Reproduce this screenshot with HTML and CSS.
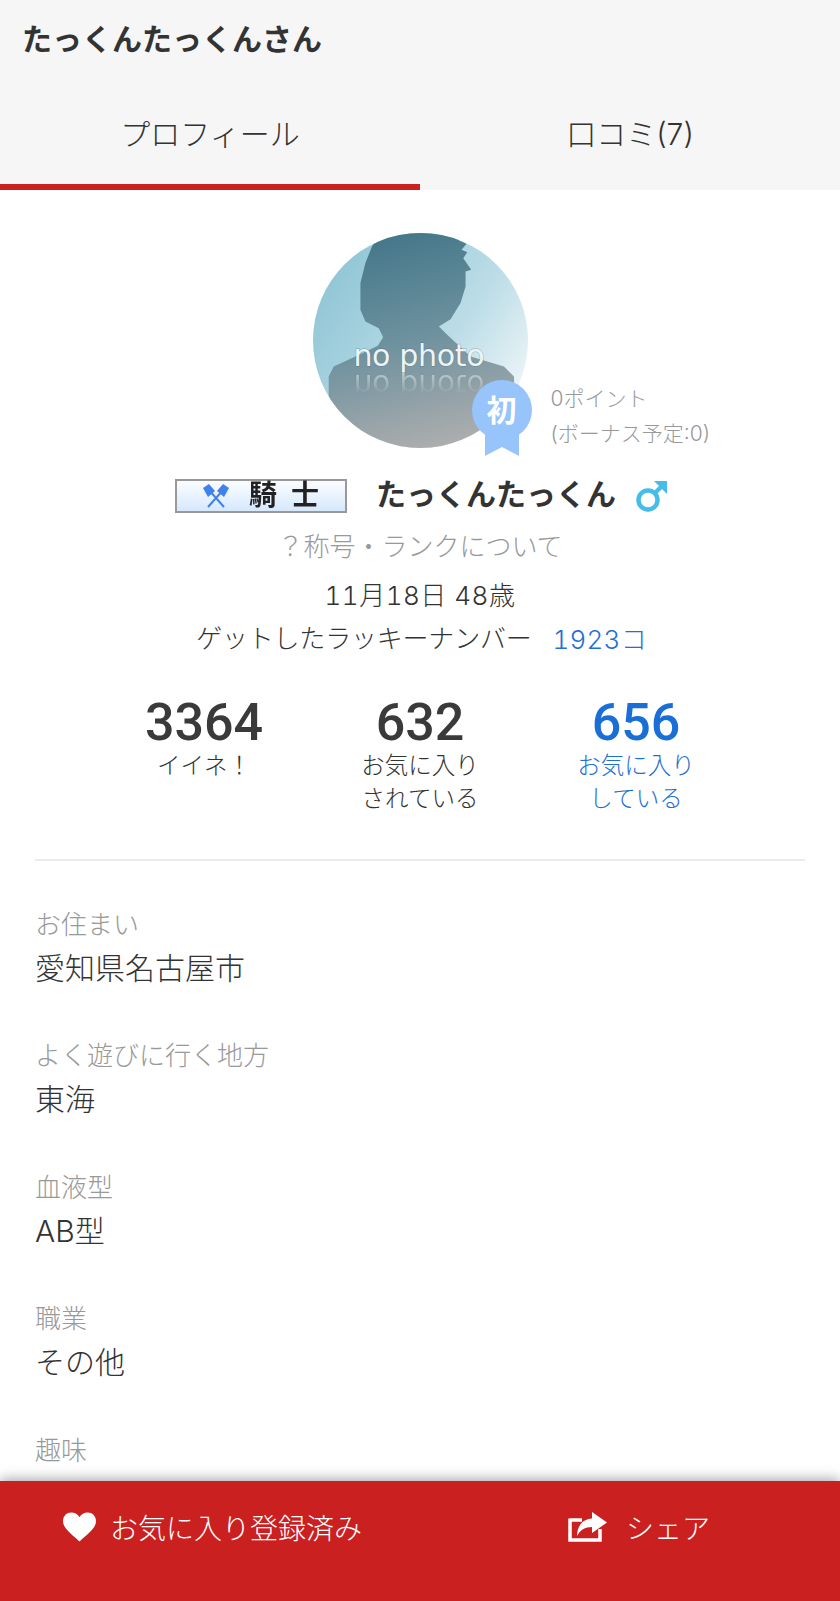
FILE: index.html
```html
<!DOCTYPE html>
<html>
<head>
    <title>たっくんたっくんさん</title>
    <link rel="stylesheet" href="styles.css">
</head>
<body>

    <div class="page">
        <header class="header">
            <h1 class="pageTitle">たっくんたっくんさん</h1>
            <nav class="tabs">
                <a class="tab active">プロフィール</a>
                <a class="tab">口コミ(7)</a>
            </nav>
        </header>

        <main class="content">
            <section class="hero">
                <div class="avatarWrap">
                    <svg class="avatar" viewBox="68 40 644 644">
                        <defs>
                            <linearGradient id="bgGrad" x1="0.1" y1="0.1" x2="0.95" y2="0.7">
                                <stop offset="0" stop-color="#8fc5d5"/>
                                <stop offset="0.65" stop-color="#bcdde7"/>
                                <stop offset="1" stop-color="#e8f3f6"/>
                            </linearGradient>
                            <linearGradient id="bodyGrad" x1="0.35" y1="0" x2="0.6" y2="1">
                                <stop offset="0" stop-color="#437789"/>
                                <stop offset="0.5" stop-color="#6f929f"/>
                                <stop offset="1" stop-color="#aeaeae"/>
                            </linearGradient>
                            <linearGradient id="fadeGrad" x1="0" y1="0" x2="0" y2="1">
                                <stop offset="0" stop-color="#fff" stop-opacity="0"/>
                                <stop offset="1" stop-color="#fff" stop-opacity="1"/>
                            </linearGradient>
                            <mask id="fadeMask" maskUnits="userSpaceOnUse" x="68" y="380" width="644" height="70">
                                <rect x="68" y="380" width="644" height="70" fill="url(#fadeGrad)"/>
                            </mask>
                            <clipPath id="circleClip"><circle cx="390" cy="362" r="322"/></clipPath>
                        </defs>
                        <g clip-path="url(#circleClip)">
                            <rect x="68" y="40" width="644" height="644" fill="url(#bgGrad)"/>
                            <path fill="url(#bodyGrad)" d="M115 530 L115 470 L130 440 L190 412 L262 378 L278 352 L265 325 L225 305 L210 270 L210 190 L225 130 L245 80 L272 40 L495 40 L505 62 L528 72 L513 90 L530 98 L518 116 L542 150 L525 155 L525 200 L510 250 L480 298 L445 320 L470 345 L540 410 L640 440 L670 470 L672 560 L712 640 L712 684 L68 684 L68 500 Z"/>
                            <text id="noPhotoText" class="noPhoto" x="385" y="438" text-anchor="middle">no photo</text>
                            <g mask="url(#fadeMask)" transform="scale(1 -1) translate(0 -902)">
                                <use href="#noPhotoText" class="reflect"/>
                            </g>
                        </g>
                    </svg>
                    <div class="ribbon">
                        <svg class="ribbonTail" viewBox="0 0 34 30"><path d="M0 0 L34 0 L34 30 L17 21 L0 30 Z"/></svg>
                        <span class="ribbonCircle">初</span>
                    </div>
                    <div class="points">
                        <div>0ポイント</div>
                        <div>(ボーナス予定:0)</div>
                    </div>
                </div>

                <div class="nameRow">
                    <div class="rankBadge">
                        <svg class="axes" viewBox="0 0 26 24">
                            <path d="M5 5 L21 23 M21 5 L5 23" stroke="#3f82ea" stroke-width="2" fill="none"/>
                            <path d="M0 4 L6 0 L12 7 L5 13 Z M26 4 L20 0 L14 7 L21 13 Z" fill="#3f82ea"/>
                        </svg>
                        <span class="rankText">騎</span>
                        <span class="rankText">士</span>
                    </div>
                    <span class="userName">たっくんたっくん</span>
                    <svg class="maleIcon" viewBox="0 0 32 32">
                        <circle cx="12" cy="20" r="9.5" fill="none" stroke="#45bde6" stroke-width="4.5"/>
                        <path d="M18.5 13.5 L28 4" stroke="#45bde6" stroke-width="4.5" fill="none"/>
                        <path d="M18 1 L31 1 L31 14 Z" fill="#45bde6"/>
                    </svg>
                </div>
                <a class="rankHelp">？称号・ランクについて</a>
                <div class="birth">11月18日 48歳</div>
                <div class="lucky">ゲットしたラッキーナンバー<a class="blue luckyCount">1923コ</a></div>
            </section>

            <section class="stats">
                <div class="stat">
                    <div class="statNum">3364</div>
                    <div class="statLabel">イイネ！</div>
                </div>
                <div class="stat">
                    <div class="statNum">632</div>
                    <div class="statLabel">お気に入り<br>されている</div>
                </div>
                <div class="stat blue">
                    <div class="statNum">656</div>
                    <div class="statLabel">お気に入り<br>している</div>
                </div>
            </section>

            <section class="fields">
                <div class="field">
                    <div class="fieldLabel">お住まい</div>
                    <div class="fieldValue">愛知県名古屋市</div>
                </div>
                <div class="field">
                    <div class="fieldLabel">よく遊びに行く地方</div>
                    <div class="fieldValue">東海</div>
                </div>
                <div class="field">
                    <div class="fieldLabel">血液型</div>
                    <div class="fieldValue">AB型</div>
                </div>
                <div class="field">
                    <div class="fieldLabel">職業</div>
                    <div class="fieldValue">その他</div>
                </div>
                <div class="field">
                    <div class="fieldLabel">趣味</div>
                </div>
            </section>
        </main>

        <footer class="footer">
            <a class="footerBtn favBtn">
                <svg class="heartIcon" viewBox="0 0 34 30"><path d="M17 30 C11 24 0 17 0 9 C0 3.500 4 0 8.500 0 C12 0 15.500 2 17 5 C18.500 2 22 0 25.500 0 C30 0 34 3.500 34 9 C34 17 23 24 17 30 Z"/></svg>
                <span>お気に入り登録済み</span>
            </a>
            <a class="footerBtn shareBtn">
                <svg class="shareIcon" viewBox="0 0 39 30">
                    <path d="M2 8 L14 8 M2 6.500 L2 28 L32 28 L32 17" stroke="#fff" stroke-width="3.500" fill="none"/>
                    <path d="M24 0 L39 10.500 L24 21 L24 15 C17 15 12 18 9 24 C9 15 14 7 24 6.500 Z" fill="#fff"/>
                </svg>
                <span>シェア</span>
            </a>
        </footer>
    </div>

</body>
</html>
```

FILE: styles.css
```css
html, body {
    margin: 0;
    padding: 0;
    height: 100%;
    overflow: hidden;
}

body {
    font-family: Inter, "Noto Sans CJK JP", sans-serif;
    font-weight: 300;
    color: #333;
    background-color: #fff;
}

.page {
    display: flex;
    flex-direction: column;
    height: 100vh;
}

.blue {
    color: #1f70d2;
}

/* header and tabs */

.header {
    background-color: #f6f6f6;
    flex: none;
}

.pageTitle {
    margin: 0;
    padding: 0 22px;
    height: 78px;
    line-height: 78px;
    font-size: 30px;
    font-weight: 700;
    color: #333;
}

.tabs {
    display: flex;
    height: 112px;
}

.tab {
    flex: 1;
    height: 106px;
    line-height: 112px;
    border-bottom: 6px solid transparent;
    text-align: center;
    font-size: 30px;
    color: #333;
}

.tab.active {
    border-bottom-color: #cc1f1f;
}

/* profile head */

.content {
    flex: 1;
    min-height: 0;
    overflow: hidden;
}

.hero {
    display: flex;
    flex-direction: column;
    align-items: center;
    padding-top: 43px;
}

.avatarWrap {
    position: relative;
    width: 215px;
    height: 215px;
}

.avatar {
    display: block;
    width: 215px;
    height: 215px;
    filter: blur(0.4px);
}

.noPhoto {
    font-family: "DejaVu Sans", sans-serif;
    font-size: 90px;
    font-weight: 400;
    fill: #eef3f5;
    stroke: rgba(60, 90, 105, 0.3);
    stroke-width: 4px;
    paint-order: stroke;
    letter-spacing: -1px;
}

.reflect {
    opacity: 0.6;
}

.ribbon {
    position: absolute;
    left: 159px;
    top: 147px;
    width: 60px;
    height: 76px;
}

.ribbonCircle {
    position: absolute;
    left: 0;
    top: 0;
    width: 60px;
    height: 60px;
    line-height: 60px;
    border-radius: 50%;
    background-color: #96c4fb;
    color: #fff;
    text-align: center;
    font-size: 30px;
    font-weight: 700;
}

.ribbonTail {
    position: absolute;
    left: 13px;
    top: 46px;
    width: 34px;
    height: 30px;
    fill: #96c4fb;
}

.points {
    position: absolute;
    left: 238px;
    top: 148px;
    white-space: nowrap;
    font-size: 21px;
    line-height: 35px;
    color: #999;
}

.nameRow {
    display: flex;
    align-items: center;
    height: 40px;
    margin-top: 28px;
    padding-left: 3px;
}

.rankBadge {
    display: flex;
    align-items: center;
    justify-content: center;
    box-sizing: border-box;
    width: 172px;
    height: 34px;
    border: 2px solid #999;
    background: linear-gradient(#fbfdff, #d6e8fd);
    filter: blur(0.4px);
}

.axes {
    width: 26px;
    height: 24px;
    margin-right: 20px;
}

.rankText {
    font-family: "Liberation Serif", "Noto Sans CJK JP", serif;
    font-size: 28px;
    font-weight: 700;
    line-height: 30px;
    color: #222;
    margin-right: 14px;
}

.rankText:last-child {
    margin-right: 0;
}

.userName {
    margin-left: 29px;
    margin-bottom: 8px;
    font-size: 30px;
    font-weight: 700;
}

.maleIcon {
    width: 32px;
    height: 32px;
    margin-left: 20px;
}

.rankHelp {
    margin-top: 11px;
    font-size: 26px;
    line-height: 40px;
    color: #999;
}

.birth {
    margin-top: 9px;
    font-size: 26px;
    line-height: 40px;
    font-variant-numeric: tabular-nums;
    letter-spacing: 0.5px;
}

.lucky {
    display: flex;
    align-items: center;
    font-size: 26px;
    line-height: 40px;
    padding-top: 1px;
    padding-left: 3px;
    letter-spacing: -0.2px;
}

.luckyCount {
    margin-left: 21px;
    padding-top: 3px;
    font-variant-numeric: tabular-nums;
    letter-spacing: 0.2px;
}

/* counters */

.stats {
    display: grid;
    grid-template-columns: repeat(3, 216px);
    justify-content: center;
    margin: 37px 35px 0;
    padding-bottom: 44px;
    border-bottom: 2px solid #ebebeb;
}

.stat {
    text-align: center;
}

.statNum {
    font-family: Roboto, sans-serif;
    font-size: 52px;
    line-height: 52px;
    font-weight: 500;
    color: #3a3a3a;
}

.stat.blue .statNum {
    color: #1a6fd6;
}

.statLabel {
    font-size: 23.5px;
    line-height: 33px;
}

/* profile fields */

.fields {
    padding: 46px 35px 0;
}

.field {
    margin-bottom: 48.4px;
}

.fieldLabel {
    font-size: 26px;
    line-height: 36px;
    color: #999;
}

.fieldValue {
    margin-top: 3px;
    font-size: 30px;
    line-height: 44px;
}

/* fixed bottom bar */

.footer {
    position: relative;
    flex: none;
    display: flex;
    height: 120px;
    background-color: #cb2020;
    box-shadow: 0 -2px 12px rgba(0, 0, 0, 0.35);
    color: #fff;
    font-size: 28px;
}

.footerBtn {
    display: flex;
    align-items: center;
    height: 92px;
}

.favBtn {
    width: 504px;
    padding-left: 63px;
    box-sizing: border-box;
}

.shareBtn {
    padding-left: 64px;
}

.heartIcon {
    width: 33px;
    height: 30px;
    margin-right: 14px;
    fill: #fff;
}

.shareIcon {
    width: 39px;
    height: 30px;
    margin-right: 19px;
}
```
